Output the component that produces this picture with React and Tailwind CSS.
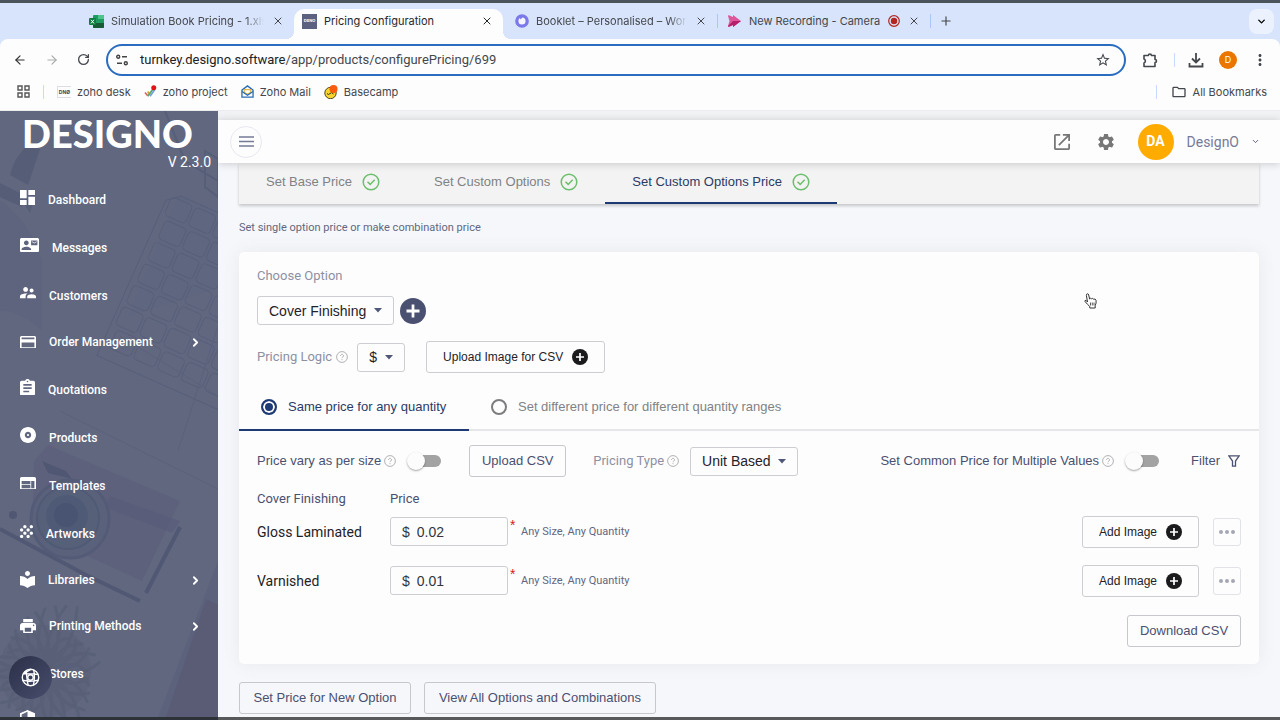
import React from "react";
import { X, Plus, ChevronDown, ChevronRight, ArrowLeft, ArrowRight, RotateCw } from "lucide-react";
import { MdSettings, MdMoreVert, MdStarBorder, MdOutlineFolder } from "react-icons/md";

const NAV = [
  { label: "Dashboard", box: "3 3 18 18", w: "w-[15px]", d: "M3 13h8V3H3v10zm0 8h8v-6H3v6zm10 0h8V11h-8v10zm0-18v6h8V3h-8z" },
  { label: "Messages", box: "0 3 24 18", w: "w-[19px]", d: "M21 8V7l-3 2-3-2v1l3 2 3-2zm1-5H2C.9 3 0 3.9 0 5v14c0 1.1.9 2 2 2h20c1.1 0 1.99-.9 1.99-2L24 5c0-1.1-.9-2-2-2zM8 6c1.66 0 3 1.34 3 3s-1.34 3-3 3-3-1.34-3-3 1.34-3 3-3zm6 12H2v-1c0-2 4-3.1 6-3.1s6 1.1 6 3.1v1zm8-6h-8V6h8v6z" },
  { label: "Customers", box: "2 5 20 14", w: "w-4", d: "M16.5 12c1.38 0 2.49-1.12 2.49-2.5S17.88 7 16.5 7 14 8.12 14 9.5s1.12 2.5 2.5 2.5zM9 11c1.66 0 2.99-1.34 2.99-3S10.66 5 9 5 6 6.34 6 8s1.34 3 3 3zm7.5 3c-1.83 0-5.5.92-5.5 2.75V19h11v-2.25c0-1.83-3.67-2.75-5.5-2.75zM9 13c-2.33 0-7 1.17-7 3.5V19h7v-2.25c0-.85.33-2.34 2.37-3.47C10.5 13.1 9.66 13 9 13z" },
  { label: "Order Management", more: true, box: "2 4 20 16", w: "w-4", d: "M20 4H4c-1.11 0-1.99.89-1.99 2L2 18c0 1.11.89 2 2 2h16c1.11 0 2-.89 2-2V6c0-1.11-.89-2-2-2zm0 14H4v-6h16v6zm0-10H4V6h16v2z" },
  { label: "Quotations", box: "3 1 18 20", w: "w-[15px]", d: "M19 3h-4.18C14.4 1.84 13.3 1 12 1c-1.3 0-2.4.84-2.82 2H5c-1.1 0-2 .9-2 2v14c0 1.1.9 2 2 2h14c1.1 0 2-.9 2-2V5c0-1.1-.9-2-2-2zm-7 0c.55 0 1 .45 1 1s-.45 1-1 1-1-.45-1-1 .45-1 1-1zm2 14H7v-2h7v2zm3-4H7v-2h10v2zm0-4H7V7h10v2z" },
  { label: "Products", box: "2 2 20 20", w: "w-4", d: "M12 2C6.48 2 2 6.48 2 12s4.48 10 10 10 10-4.48 10-10S17.52 2 12 2zm0 14c-2.21 0-4-1.79-4-4s1.79-4 4-4 4 1.79 4 4-1.79 4-4 4zm0-5.3c-.72 0-1.3.58-1.3 1.3s.58 1.3 1.3 1.3 1.3-.58 1.3-1.3-.58-1.3-1.3-1.3z" },
  { label: "Templates", box: "2 4 20 16", w: "w-4", d: "M20 4H4c-1.1 0-1.99.9-1.99 2L2 18c0 1.1.9 2 2 2h16c1.1 0 2-.9 2-2V6c0-1.1-.9-2-2-2zm-5 14H4v-4h11v4zm0-5H4V9h11v4zm5 5h-4V9h4v9z" },
  { label: "Artworks", box: "4 4 16 16", w: "w-[13px]", d: "M10 12c-1.1 0-2 .9-2 2s.9 2 2 2 2-.9 2-2-.9-2-2-2zM6 8c-1.1 0-2 .9-2 2s.9 2 2 2 2-.9 2-2-.9-2-2-2zm0 8c-1.1 0-2 .9-2 2s.9 2 2 2 2-.9 2-2-.9-2-2-2zm12-8c1.1 0 2-.9 2-2s-.9-2-2-2-2 .9-2 2 .9 2 2 2zm-4 8c-1.1 0-2 .9-2 2s.9 2 2 2 2-.9 2-2-.9-2-2-2zm4-4c-1.1 0-2 .9-2 2s.9 2 2 2 2-.9 2-2-.9-2-2-2zm-4-4c-1.1 0-2 .9-2 2s.9 2 2 2 2-.9 2-2-.9-2-2-2zm-4-4c-1.1 0-2 .9-2 2s.9 2 2 2 2-.9 2-2-.9-2-2-2z" },
  { label: "Libraries", more: true, box: "3 2 18 20.6", w: "w-[15px]", d: "M12 11.55C9.64 9.35 6.48 8 3 8v11c3.48 0 6.64 1.35 9 3.55 2.36-2.19 5.52-3.55 9-3.55V8c-3.48 0-6.64 1.35-9 3.55zM12 8c1.66 0 3-1.34 3-3s-1.34-3-3-3-3 1.34-3 3 1.34 3 3 3z" },
  { label: "Printing Methods", more: true, box: "2 3 20 18", w: "w-4", d: "M19 8H5c-1.66 0-3 1.34-3 3v6h4v4h12v-4h4v-6c0-1.66-1.34-3-3-3zm-3 11H8v-5h8v5zm3-7c-.55 0-1-.45-1-1s.45-1 1-1 1 .45 1 1-.45 1-1 1zm-1-9H6v4h12V3z" },
  { label: "Stores", box: "3 4 18 16", w: "w-4", d: "M20 4H4v2h16V4zm1 10v-2l-1-5H4l-1 5v2h1v6h10v-6h4v6h2v-6h1zm-9 4H6v-4h6v4z" },
  { label: "Security", box: "3 1 18 22", w: "w-[15px]", d: "M12 1L3 5v6c0 5.55 3.84 10.74 9 12 5.16-1.26 9-6.45 9-12V5l-9-4zm0 10.99h7c-.53 4.12-3.28 7.79-7 8.94V12H5V6.3l7-3.11v8.8z" },
];

function SidebarArt() {
  const keys = [];
  for (let r = 0; r < 7; r++) for (let c = 0; c < 6; c++) keys.push([c * 26, r * 24]);
  const leaves = Array.from({ length: 40 }, (_, i) => {
    const a = (i / 40) * Math.PI * 2;
    const r = 40 + ((i * 37) % 34);
    const x = 45 + Math.cos(a) * r;
    const y = 560 + Math.sin(a) * r;
    const bend = i % 2 ? 0.5 : -0.4;
    return `M45 560Q${45 + Math.cos(a + bend) * 34} ${560 + Math.sin(a + bend) * 34} ${x} ${y}`;
  });
  return (
    <svg aria-hidden="true" className="absolute inset-0 h-full w-full" viewBox="0 0 218 606" preserveAspectRatio="xMinYMin slice" fill="none">
      <path d="M0 0h218v606H0z" fill="#60677f" />
      <path d="M0 90q30 20 42 60v70q-20-20-42-20z" fill="#5e647d" />
      <path d="M28 34q-14 12-18 30l18 10 12-36z" fill="#565d77" />
      <path d="M0 72l24 12-2 12L0 86zM22 90l14-8-6 20z" fill="#565d77" />
      <path d="M165 0l20 50 33 20M205 40l13 8v38l-13-10z" stroke="#575e77" strokeWidth="2" />
      <path d="M178 85l40 16v76l-90 28z" fill="#5f667f" />
      <g transform="translate(181 85) rotate(24)" stroke="#575e78" strokeWidth="1" opacity=".8">
        <path d="M0 0h120v180H-12V10z" />
        {keys.map(([x, y]) => (
          <rect key={`${x}-${y}`} x={x - 8 + (y % 5)} y={y + 4} width="23" height="20" rx="4" />
        ))}
      </g>
      <path d="M218 215l-40 125M60 300l158 78M120 225l98 60" stroke="#5b627b" />
      <path d="M218 450l-60 156h60z" fill="#5c627b" />
      <path d="M206 488l12 6v112h-52z" fill="#5a5a75" opacity=".7" />
      <g opacity=".85">
        <path d="M34 350l14-16 132 56-38 80-110-50z" fill="#5e617b" />
        <path d="M110 385l70 25-8 12-68-26z" fill="#59597a" opacity=".6" />
        <path d="M0 418l86 46 54 26M180 416l-34 66" stroke="#4e5671" strokeWidth="4" />
        <path d="M42 350l24 10 6 8-24-6z" fill="#4d5570" />
        <circle cx="70" cy="408" r="39" fill="#5a617b" stroke="#525a75" strokeWidth="3" />
        <circle cx="68" cy="407" r="31" fill="#556078" stroke="#4e5874" strokeWidth="2" />
        <circle cx="67" cy="405" r="21" fill="#4d5875" />
        <circle cx="66" cy="404" r="12" fill="#465170" />
        <circle cx="13" cy="404" r="4" fill="#4d5571" />
      </g>
      <circle cx="45" cy="560" r="46" fill="#586078" opacity=".5" />
      <path d={leaves.join("")} stroke="#555e73" strokeWidth="3" strokeLinecap="round" opacity=".6" />
    </svg>
  );
}

function NavItem({ item }) {
  return (
    <li>
      <a href="#" className={"flex items-center pr-4 pl-5 text-white " + (item.more ? "h-[46px]" : "h-12")}>
        <svg viewBox={item.box} className={"shrink-0 fill-current " + item.w + (item.more ? "" : " mb-1")}>
          <path d={item.d} />
        </svg>
        <span className={"ml-[13px] flex-1 text-[12px] leading-4 font-medium" + (item.more ? "" : " mt-[2px]")}>{item.label}</span>
        {item.more && <ChevronRight className="size-[13px]" strokeWidth={3.4} />}
      </a>
    </li>
  );
}

function Sidebar() {
  return (
    <aside className="relative w-[218px] shrink-0 overflow-hidden bg-[#60677f] font-['Roboto',sans-serif] text-white">
      <SidebarArt />
      <div className="relative flex flex-col">
        <div className="pl-[22px] font-['Lato',sans-serif] text-[38px] leading-[44px] font-black">DESIGNO</div>
        <div className="pr-[7px] text-right text-[14px] leading-[14px]">V 2.3.0</div>
        <nav className="mt-[6px]">
          <ul>
            {NAV.map((i) => (
              <NavItem key={i.label} item={i} />
            ))}
          </ul>
        </nav>
      </div>
      <button aria-label="Accessibility" className="absolute bottom-[18px] left-[9px] flex size-[43px] items-center justify-center rounded-full bg-linear-to-br from-[#2c3048] to-[#474d6c]">
        <svg viewBox="0 0 18 18" className="size-[19px]" fill="none" stroke="#fff" strokeWidth="1.3">
          <circle cx="9" cy="9" r="7.8" />
          <circle cx="9" cy="9" r="2.6" />
          <path d="M2 5.5Q7 2.5 9.500 1.200M2 5.500Q8 5 16.300 6.200M5.200 2.200Q5 8 6.800 16.500M12 1.800Q13.500 8 11.800 16.300M1.500 11.500Q8 13.500 16.500 11.500" />
        </svg>
      </button>
    </aside>
  );
}

function Tab({ icon, title, className, active, extra, fade }) {
  return (
    <div className={"relative flex h-[30px] items-center pb-[6px] text-[11px] leading-4 " + (active ? "rounded-t-[10px] bg-[#fdfdfe] text-[#26292c] " : "text-[#44474c] ") + className}>
      {active && (
        <>
          <span className="absolute bottom-0 -left-2 size-2 bg-[radial-gradient(circle_at_0_0,transparent_8px,#fdfdfe_8px)]" />
          <span className="absolute -right-2 bottom-0 size-2 bg-[radial-gradient(circle_at_100%_0,transparent_8px,#fdfdfe_8px)]" />
        </>
      )}
      <span className="flex w-[15px] shrink-0 justify-center">{icon}</span>
      <span className={"ml-[7px] min-w-0 flex-1 overflow-hidden whitespace-nowrap " + (fade ? "[mask-image:linear-gradient(to_right,black_88%,transparent)]" : "")}>{title}</span>
      {extra}
      <button aria-label={"Close " + title} className="mr-[10px] ml-2 shrink-0">
        <X className="size-3" />
      </button>
    </div>
  );
}

function Browser() {
  return (
    <header className="shrink-0 bg-[#d7e4fb] font-['Inter',sans-serif]">
      <div className="h-[3px] bg-[#4b535b]" />
      <div className="flex h-9 items-end pr-[6px] pl-[89px]">
        <Tab
          className="w-[205px]"
          fade
          title="Simulation Book Pricing - 1.xls"
          icon={
            <svg viewBox="0 0 15 13" className="w-[15px]">
              <rect x="4" width="11" height="13" rx="1" fill="#1f9d60" />
              <path d="M9 0h5a1 1 0 0 1 1 1v3H9z" fill="#4cc48a" />
              <path d="M4 8h11v4a1 1 0 0 1-1 1H5a1 1 0 0 1-1-1z" fill="#185c37" />
              <rect y="3" width="7" height="7" rx="1" fill="#107c41" />
              <path d="M2 4.800l3 3.600M5 4.800L2 8.400" stroke="#fff" />
            </svg>
          }
        />
        <Tab active className="w-[209px] pl-2" title="Pricing Configuration" icon={<span className="flex size-[15px] items-center justify-center bg-[#5c6180] text-[4px] leading-none font-bold text-white">DSNO</span>} />
        <Tab
          className="w-[214px] pl-[11px]"
          fade
          title="Booklet – Personalised – Wor"
          icon={
            <svg viewBox="0 0 14 14" className="size-[14px]">
              <circle cx="7" cy="7" r="5.200" fill="#f5f4ff" stroke="#7a78ea" strokeWidth="3.300" />
              <path d="M4.500 2.500l3 1-2 2z" fill="#7a78ea" />
            </svg>
          }
        />
        <span className="mb-[11px] h-[14px] w-px bg-[#a8c7fa]" />
        <Tab
          className="w-[212px] pl-[9px]"
          title="New Recording - Camera"
          icon={
            <svg viewBox="0 0 13 12" className="w-[13px]">
              <path d="M0 1q0-1 1-.8L5 2V0l8 6-8 6V10l-4 1.800Q0 12 0 11L1.500 6z" fill="#e0569a" />
              <path d="M5 6h8l-8 6V10l-4 1.800Q0 12 0 11z" fill="#b51f6b" />
            </svg>
          }
          extra={
            <svg viewBox="0 0 12 12" className="ml-1 size-3 shrink-0">
              <circle cx="6" cy="6" r="5.300" fill="none" stroke="#b3261e" strokeWidth="1.200" />
              <circle cx="6" cy="6" r="3.200" fill="#b3261e" />
            </svg>
          }
        />
        <span className="mb-[11px] h-[14px] w-px bg-[#a8c7fa]" />
        <button aria-label="New tab" className="mb-[11px] ml-2 text-[#44474c]">
          <Plus className="size-[14px]" />
        </button>
        <button aria-label="Search tabs" className="mb-[5px] ml-auto flex size-[25px] items-center justify-center rounded-lg bg-[#ebf2fe]">
          <ChevronDown className="size-[11px]" strokeWidth={3} />
        </button>
      </div>
      <div className="rounded-t-lg bg-[#fdfdfe] text-[#44474c]">
        <div className="flex h-[41px] items-center pr-[11px] pl-[13px]">
          <button aria-label="Back"><ArrowLeft className="size-[14px] text-[#333]" /></button>
          <button aria-label="Forward" className="ml-[18px]"><ArrowRight className="size-[14px] text-[#a9abad]" /></button>
          <button aria-label="Reload" className="ml-[18px]"><RotateCw className="size-[13px]" strokeWidth={2.4} /></button>
          <div className="ml-4 flex h-8 flex-1 items-center rounded-full border-2 border-[#2a6cc0] pr-[13px] pl-2">
            <svg viewBox="0 0 12 12" className="size-3" fill="none" stroke="#444" strokeWidth="1.400">
              <circle cx="2.200" cy="2.800" r="1.500" />
              <path d="M6 2.800h5M1 9.200h5" />
              <circle cx="9.800" cy="9.200" r="1.500" />
            </svg>
            <div role="textbox" aria-label="Address" className="ml-3 flex-1 font-['Roboto',sans-serif] text-[13px] leading-5">
              <span className="text-[#202124]">turnkey.designo.software</span>/app/products/configurePricing/699
            </div>
            <MdStarBorder className="size-4" />
          </div>
          <svg viewBox="0 0 16 16" className="ml-4 size-4" fill="none" stroke="#44474c" strokeWidth="1.600" strokeLinejoin="round">
            <path d="M2 3.500h4.400a1.500 1.500 0 0 1 3 0H13v4a1.500 1.500 0 0 1 0 3v4H2v-3.600a2 2 0 0 0 0-3.800z" />
          </svg>
          <span className="ml-4 h-[14px] w-px bg-[#c7dafa]" />
          <svg viewBox="0 0 16 16" className="ml-[13px] size-4" fill="none" stroke="#44474c" strokeWidth="1.800">
            <path d="M8 1v9M4 6.500l4 4 4-4M1.500 11v3.500h13V11" />
          </svg>
          <span className="ml-[15px] flex size-[18px] items-center justify-center rounded-full bg-[#ea7600] text-[9px] text-white">D</span>
          <MdMoreVert className="ml-[14px] size-[18px]" />
        </div>
        <div className="flex h-[31px] items-center border-b border-[#ebebed] pr-[13px] pb-[7px] pl-[17px] text-[11px] leading-4">
          <svg viewBox="0 0 13 13" className="size-[13px]" fill="none" stroke="#555" strokeWidth="1.400">
            <path d="M1 1h4v4H1zM8 1h4v4H8zM1 8h4v4H1zM8 8h4v4H8z" />
          </svg>
          <span className="ml-[13px] h-[14px] w-px bg-[#c7dafa]" />
          <span className="ml-[13px] flex h-3 w-[14px] items-center justify-center border border-r-0 border-[#dcdce6] text-[5px] font-bold">DNØ</span>
          <a href="#" className="ml-[6px]">zoho desk</a>
          <svg viewBox="0 0 14 14" className="ml-[13px] size-[13px]" fill="none" strokeWidth="1.800">
            <path d="M1 8l3 3.500" stroke="#e0645c" />
            <path d="M4 7l2 3" stroke="#e0a030" />
            <path d="M4 12l6-8" stroke="#54a868" />
            <path d="M6.500 12l5-7" stroke="#6f9fd8" />
            <circle cx="10.500" cy="3" r="2.700" fill="#e1121a" />
          </svg>
          <a href="#" className="ml-[6px]">zoho project</a>
          <svg viewBox="0 0 14 14" className="ml-[13px] size-[13px]" fill="none" strokeWidth="1.400">
            <path d="M1 5.500L7 1l6 4.500V13H1z" stroke="#2b6cb5" />
            <path d="M3.500 5h7v3L7 10 3.500 8z" stroke="#e8b64a" />
            <path d="M1 7l6 4 6-4" stroke="#2b6cb5" />
          </svg>
          <a href="#" className="ml-[6px]">Zoho Mail</a>
          <svg viewBox="0 0 14 14" className="ml-[13px] size-[14px]">
            <circle cx="6.500" cy="8" r="5.700" fill="#f7d32e" stroke="#3a3312" strokeWidth=".9" />
            <path d="M3 8.500q1.500 2 3 0t3.500.5" fill="none" stroke="#3a3312" />
            <circle cx="9.500" cy="4" r="4" fill="#fb5a12" />
          </svg>
          <a href="#" className="ml-[6px]">Basecamp</a>
          <span className="ml-auto h-[14px] w-px bg-[#c7dafa]" />
          <MdOutlineFolder className="ml-[14px] size-4" />
          <a href="#" className="ml-[6px]">All Bookmarks</a>
        </div>
      </div>
    </header>
  );
}

function Help() {
  return (
    <svg viewBox="0 0 12 12" className="size-3 shrink-0" fill="none" stroke="#a9a9ad" strokeWidth=".9">
      <circle cx="6" cy="6" r="5.400" />
      <path d="M4.500 4.800a1.500 1.500 0 1 1 2.300 1.300Q6 6.500 6 7.200M6 8.200v.9" />
    </svg>
  );
}

function PlusDisc({ className = "size-4", fill = "#1b1b1d" }) {
  return (
    <svg viewBox="0 0 16 16" className={"shrink-0 " + className}>
      <circle cx="8" cy="8" r="8" fill={fill} />
      <path d="M8 4v8M4 8h8" stroke="#fff" strokeWidth="1.700" />
    </svg>
  );
}

function Dropdown({ label, value, className }) {
  return (
    <span className={"relative inline-flex items-center " + className}>
      <select aria-label={label} defaultValue={value} className="h-[29px] w-full appearance-none rounded-[3px] border border-[#ccced2] bg-transparent pl-[11px] text-[14px] leading-5 text-[#1f2227]">
        <option>{value}</option>
      </select>
      <svg viewBox="0 0 8 5" className="pointer-events-none absolute right-3 w-2">
        <path d="M0 0h8L4 4.600z" fill="#505878" />
      </svg>
    </span>
  );
}

function Toggle({ id }) {
  return (
    <input
      id={id}
      type="checkbox"
      role="switch"
      className="relative h-[18px] w-[34px] shrink-0 appearance-none before:absolute before:top-[3px] before:right-0 before:h-3 before:w-[28px] before:rounded-full before:bg-[#a3a3a3] after:absolute after:top-0 after:left-0 after:size-[18px] after:rounded-full after:bg-[#fcfcfc] after:shadow-[0_1px_2px_rgba(0,0,0,0.35)]"
    />
  );
}

function StepTab({ label, active }) {
  return (
    <a href="#" className={"flex h-full items-center gap-[10px] border-b-2 px-[27px] pb-[2px] text-[13px] leading-5 " + (active ? "border-[#1d3a75] text-[#2a3b66]" : "border-transparent text-[#808285]")}>
      {label}
      <svg viewBox="0 0 18 18" className="size-[18px]" fill="none" stroke="#6cbf6c" strokeWidth="1.500">
        <circle cx="9" cy="9" r="7.800" />
        <path d="M5.500 8.800l2.700 2.600 4.500-4.600" />
      </svg>
    </a>
  );
}

const OUTLINE = "h-8 rounded-[3px] border border-[#c6c8cc] text-[13px] leading-5 text-[#4a5070] whitespace-nowrap";

function PriceRow({ name, price }) {
  return (
    <tr className="h-[49px]">
      <td className="w-[133px] font-['Roboto',sans-serif] text-[14px] leading-5 text-[#1f2227]">{name}</td>
      <td className="w-[131px]">
        <div className="flex">
          <label className="flex h-[29px] w-[118px] items-center rounded-[3px] border border-[#ccced2] pl-[11px] text-[14px] leading-5 text-[#33363b]">
            $
            <input aria-label={name + " price"} defaultValue={price} className="ml-[7px] w-20 bg-transparent outline-none" />
          </label>
          <span className="ml-[2px] h-4 text-[14px] leading-4 text-[#d32020]">*</span>
        </div>
      </td>
      <td className="font-['Roboto',sans-serif] text-[11px] leading-4 text-[#61677f]">Any Size, Any Quantity</td>
      <td>
        <div className="flex items-center justify-end gap-[14px]">
          <button className="flex h-8 w-[117px] items-center justify-center gap-[9px] rounded-[3px] border border-[#ccced2] text-[12px] leading-5 text-[#1f2227]">
            Add Image
            <PlusDisc />
          </button>
          <button aria-label={"More for " + name} className="flex h-7 w-7 items-center justify-center gap-[2px] rounded-[3px] border border-[#e2e3e6]">
            <span className="size-1 rounded-full bg-[#a4a7b3]" />
            <span className="size-1 rounded-full bg-[#a4a7b3]" />
            <span className="size-1 rounded-full bg-[#a4a7b3]" />
          </button>
        </div>
      </td>
    </tr>
  );
}

function PricingCard() {
  return (
    <section className="mt-[15px] rounded-[5px] bg-[#fdfdfe] pt-[14px] pb-[17px] shadow-[0_0_18px_rgba(90,95,120,0.09)]">
      <div className="px-[18px]">
        <h2 className="font-['Roboto',sans-serif] text-[13px] leading-5 text-[#8d90a3]">Choose Option</h2>
        <div className="mt-[10px] flex items-center gap-[6px]">
          <Dropdown label="Option" value="Cover Finishing" className="w-[137px]" />
          <button aria-label="Add option">
            <PlusDisc className="size-[26px]" fill="#4a5070" />
          </button>
        </div>
        <div className="mt-4 flex items-center">
          <span className="font-['Roboto',sans-serif] text-[13px] leading-5 text-[#8d90a3]">Pricing Logic</span>
          <span className="ml-1"><Help /></span>
          <Dropdown label="Pricing Logic" value="$" className="ml-[9px] w-12" />
          <button className="ml-[21px] flex h-8 w-[179px] items-center justify-center gap-[9px] rounded-[3px] border border-[#ccced2] text-[12px] leading-5 text-[#1f2227]">
            Upload Image for CSV
            <PlusDisc />
          </button>
        </div>
      </div>
      <div className="mt-3 flex h-[46px] border-b-2 border-[#e6e6e8] text-[13px] leading-5">
        <label className="-mb-[2px] flex w-[230px] items-center gap-[11px] border-b-2 border-[#1d3a75] pl-[22px] text-[#2a3b66]">
          <input type="radio" name="mode" defaultChecked className="size-4 appearance-none rounded-full border-2 border-[#1d3a75] bg-[#1d3a75] shadow-[inset_0_0_0_2px_#fdfdfe]" />
          Same price for any quantity
        </label>
        <label className="flex items-center gap-[11px] pl-[22px] text-[#808285]">
          <input type="radio" name="mode" className="size-4 appearance-none rounded-full border-2 border-[#7d7d7f]" />
          Set different price for different quantity ranges
        </label>
      </div>
      <div className="px-[18px]">
        <div className="mt-[14px] flex h-8 items-center text-[13px] leading-5 text-[#4a5070]">
          <label htmlFor="vary">Price vary as per size</label>
          <span className="mr-[11px] ml-[3px]"><Help /></span>
          <Toggle id="vary" />
          <button className={OUTLINE + " ml-7 w-[97px]"}>Upload CSV</button>
          <span className="ml-[27px] font-['Roboto',sans-serif] text-[13px] text-[#8d90a3]">Pricing Type</span>
          <span className="mr-[11px] ml-[3px]"><Help /></span>
          <Dropdown label="Pricing Type" value="Unit Based" className="w-[108px]" />
          <label htmlFor="common" className="ml-auto">Set Common Price for Multiple Values</label>
          <span className="mr-[11px] ml-[3px]"><Help /></span>
          <Toggle id="common" />
          <button className="mr-[1px] ml-8 flex items-center gap-2">
            Filter
            <svg viewBox="0 0 12 12" className="size-3" fill="none" stroke="#4a5070" strokeWidth="1.300">
              <path d="M.8.8h10.400L7.500 6v5.200h-3V6z" />
            </svg>
          </button>
        </div>
        <table className="mt-[14px] w-full text-left">
          <thead>
            <tr className="font-['Roboto',sans-serif] text-[13px] leading-4 text-[#4a5070]">
              <th className="font-normal">Cover Finishing</th>
              <th className="font-normal">Price</th>
              <th />
              <th />
            </tr>
          </thead>
          <tbody>
            <PriceRow name="Gloss Laminated" price="0.02" />
            <PriceRow name="Varnished" price="0.01" />
          </tbody>
        </table>
        <div className="mt-[10px] flex justify-end">
          <button className={OUTLINE + " w-[114px]"}>Download CSV</button>
        </div>
      </div>
    </section>
  );
}

function Main() {
  return (
    <main className="relative flex min-w-0 flex-1 flex-col overflow-hidden bg-[#f6f7fa] font-['Liberation_Sans',Arial,sans-serif]">
      <div className="h-[9px] shrink-0 bg-[#f1f2f4]" />
      <header className="relative z-10 flex h-[43px] shrink-0 items-center bg-[#fdfdfe] pr-5 pl-3 font-['Roboto',sans-serif] shadow-[0_1px_8px_rgba(0,0,0,0.18)]">
        <button aria-label="Toggle menu" className="flex size-8 items-center justify-center rounded-full border border-[#e8e8f0]">
          <svg viewBox="0 0 15 11" className="w-[15px]" stroke="#757b96" strokeWidth="1.500">
            <path d="M0 1h15M0 5.500h15M0 10h15" />
          </svg>
        </button>
        <a href="#" aria-label="Open store" className="ml-auto">
          <svg viewBox="3 3 18 18" className="size-4 fill-[#777]">
            <path d="M19 19H5V5h5V3H5c-1.110 0-2 .9-2 2v14c0 1.100.89 2 2 2h14c1.100 0 2-.9 2-2v-5h-2v5zM13 3v2h4.590l-9.830 9.830 1.410 1.410L19 6.410V11h2V3h-8z" />
          </svg>
        </a>
        <button aria-label="Settings" className="ml-[26px]"><MdSettings className="size-5 text-[#777]" /></button>
        <span className="ml-[22px] flex size-9 items-center justify-center rounded-full bg-[#ffab00] text-[14px] font-bold text-white">DA</span>
        <span className="ml-[13px] text-[14px] leading-5 text-[#757b96]">DesignO</span>
        <ChevronDown className="ml-3 size-[9px] text-[#555b78]" strokeWidth={2.5} />
      </header>
      <div className="flex flex-col px-[21px]">
        <nav className="flex h-[41px] bg-[#f3f3f3] shadow-[0_2px_3px_rgba(0,0,0,0.2)]">
          <StepTab label="Set Base Price" />
          <StepTab label="Set Custom Options" />
          <StepTab label="Set Custom Options Price" active />
        </nav>
        <p className="mt-[15px] font-['Roboto',sans-serif] text-[11px] leading-[18px] text-[#61677f]">Set single option price or make combination price</p>
        <PricingCard />
        <div className="mt-[18px] flex gap-[13px]">
          <button className={OUTLINE + " w-[172px]"}>Set Price for New Option</button>
          <button className={OUTLINE + " w-[232px]"}>View All Options and Combinations</button>
        </div>
      </div>
      <svg aria-hidden="true" viewBox="0 0 13 16" className="absolute top-[182px] left-[866px] z-20 h-4 w-[13px]" fill="#fff" stroke="#333" strokeWidth="1">
        <path d="M3.500 9L2.400 2.500Q2.200 1 3.300.8T4.700 2L5.600 6Q6.500 4.600 7.600 5.800 8.800 4.800 9.700 6.200 11.300 5.400 12 7.200q.6 3-.8 5.300V15H5.800v-1.500Q3.500 11.500 1 8.500.6 7.300 2 7.300z" />
        <path d="M6.500 9.500v3M8.300 9.500v3M10 9.500v3" strokeWidth=".8" />
      </svg>
    </main>
  );
}

export default function App() {
  return (
    <div className="flex h-screen flex-col overflow-hidden">
      <Browser />
      <div className="flex min-h-0 flex-1">
        <Sidebar />
        <Main />
      </div>
      <div className="flex h-[3px] shrink-0">
        <span className="w-[218px] bg-[#2d3238]" />
        <span className="flex-1 bg-[#57595b]" />
      </div>
    </div>
  );
}
